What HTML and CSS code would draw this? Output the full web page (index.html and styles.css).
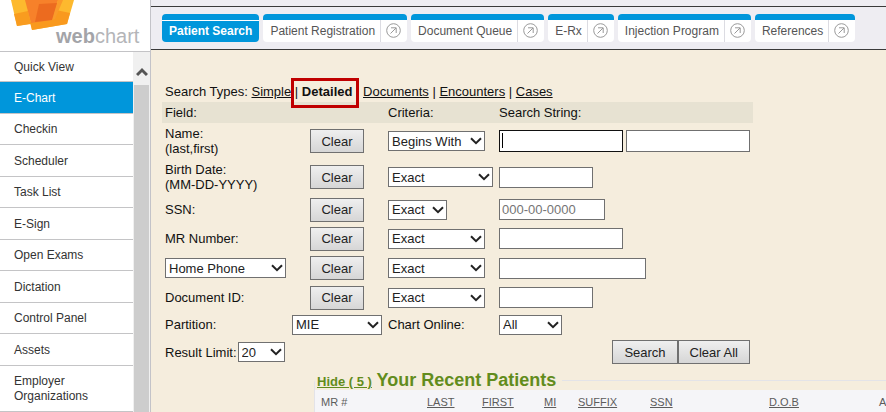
FILE: index.html
```html
<!DOCTYPE html>
<html lang="en">
<head>
<meta charset="utf-8">
<title>WebChart</title>
<link rel="stylesheet" href="styles.css">
</head>
<body>
<svg class="defs" aria-hidden="true">
  <symbol id="open" viewBox="0 0 15 15"><circle cx="7.5" cy="7.5" r="6.8"/><path d="M4.5 10.5 10 5M5 4.8h5.2V10"/></symbol>
  <symbol id="chevron" viewBox="0 0 12 8"><path d="M1 1.2 6 6.2 11 1.2"/></symbol>
</svg>
<aside class="sidebar">
  <div class="logo">
    <svg class="logo-mark" viewBox="0 0 66 31" aria-hidden="true">
      <path fill="#fdb92e" d="M1 0H48L42 20 7 26Z"/>
      <path fill="#fdb92e" d="M15 0H64L57 24 22 30Z"/>
      <path fill="#f99c1f" d="M4 14 18 11 21 24 7 26Z"/>
      <path fill="#f9991e" d="M20 22 42 20 46 10 60 13 57 24 22 30Z"/>
      <path fill="#f7812a" d="M15 0H48L42 20 21 23Z"/>
      <path fill="#fa9a2a" d="M48 0H53L45 19 42 20Z"/>
      <path fill="#ec6b1f" d="M29 4 47 3 42 20 25 22Z"/>
    </svg>
    <div class="logo-name"><b>web</b>chart</div>
  </div>
  <div class="menu">
    <nav class="menu-list">
      <a href="#">Quick View</a>
      <a href="#" class="active">E-Chart</a>
      <a href="#">Checkin</a>
      <a href="#">Scheduler</a>
      <a href="#">Task List</a>
      <a href="#">E-Sign</a>
      <a href="#">Open Exams</a>
      <a href="#">Dictation</a>
      <a href="#">Control Panel</a>
      <a href="#">Assets</a>
      <a href="#">Employer Organizations</a>
    </nav>
    <div class="scrollbar">
      <svg viewBox="0 0 12 10" aria-hidden="true"><path d="M1 8 6 3 11 8"/></svg>
      <div class="thumb"></div>
    </div>
  </div>
</aside>
<main class="main">
  <nav class="tabs">
    <div class="tab current"><a href="#">Patient Search</a></div>
    <div class="tab"><a href="#">Patient Registration</a><a href="#" class="pop" aria-label="Open"><svg><use href="#open"/></svg></a></div>
    <div class="tab"><a href="#">Document Queue</a><a href="#" class="pop" aria-label="Open"><svg><use href="#open"/></svg></a></div>
    <div class="tab"><a href="#">E-Rx</a><a href="#" class="pop" aria-label="Open"><svg><use href="#open"/></svg></a></div>
    <div class="tab"><a href="#">Injection Program</a><a href="#" class="pop" aria-label="Open"><svg><use href="#open"/></svg></a></div>
    <div class="tab"><a href="#">References</a><a href="#" class="pop" aria-label="Open"><svg><use href="#open"/></svg></a></div>
  </nav>
  <div class="content">
    <div class="types">Search Types: <a href="#">Simple</a> | <strong class="marked">Detailed</strong> | <a href="#">Documents</a> | <a href="#">Encounters</a> | <a href="#">Cases</a></div>
    <form class="search">
      <div class="row head"><span>Field:</span><span></span><span>Criteria:</span><span>Search String:</span></div>
      <div class="row tall">
        <label for="last">Name:<br>(last,first)</label>
        <button type="button">Clear</button>
        <span class="select w97"><select aria-label="Name criteria"><option>Begins With</option></select><svg><use href="#chevron"/></svg></span>
        <span class="pair"><span class="focused"><input id="last" class="w124" type="text"></span><input class="w124" type="text" aria-label="First name"></span>
      </div>
      <div class="row tall">
        <label for="birth">Birth Date:<br>(MM-DD-YYYY)</label>
        <button type="button">Clear</button>
        <span class="select w105"><select aria-label="Birth date criteria"><option>Exact</option></select><svg><use href="#chevron"/></svg></span>
        <input id="birth" class="w94" type="text">
      </div>
      <div class="row">
        <label for="ssn">SSN:</label>
        <button type="button">Clear</button>
        <span class="select w59"><select aria-label="SSN criteria"><option>Exact</option></select><svg><use href="#chevron"/></svg></span>
        <input id="ssn" class="w106" type="text" placeholder="000-00-0000">
      </div>
      <div class="row">
        <label for="mr">MR Number:</label>
        <button type="button">Clear</button>
        <span class="select w97"><select aria-label="MR number criteria"><option>Exact</option></select><svg><use href="#chevron"/></svg></span>
        <input id="mr" class="w124" type="text">
      </div>
      <div class="row roomy">
        <span class="select w121"><select aria-label="Contact field"><option>Home Phone</option></select><svg><use href="#chevron"/></svg></span>
        <button type="button">Clear</button>
        <span class="select w97"><select aria-label="Phone criteria"><option>Exact</option></select><svg><use href="#chevron"/></svg></span>
        <input class="w147" type="text" aria-label="Phone">
      </div>
      <div class="row">
        <label for="doc">Document ID:</label>
        <button type="button">Clear</button>
        <span class="select w97"><select aria-label="Document criteria"><option>Exact</option></select><svg><use href="#chevron"/></svg></span>
        <input id="doc" class="w94" type="text">
      </div>
      <div class="row partition">
        <label for="part">Partition:</label>
        <span class="select w90"><select id="part"><option>MIE</option></select><svg><use href="#chevron"/></svg></span>
        <label for="online">Chart Online:</label>
        <span class="select w63"><select id="online"><option>All</option></select><svg><use href="#chevron"/></svg></span>
      </div>
      <div class="limit">
        <label for="limit">Result Limit:</label>
        <span class="select w47"><select id="limit"><option>20</option></select><svg><use href="#chevron"/></svg></span>
        <div class="actions"><button type="submit">Search</button><button type="reset">Clear All</button></div>
      </div>
    </form>
    <fieldset class="recent">
      <legend><a href="#">Hide ( 5 )</a> Your Recent Patients</legend>
      <table>
        <colgroup><col class="c-mr"><col class="c-last"><col class="c-first"><col class="c-mi"><col class="c-suffix"><col class="c-ssn"><col class="c-dob"><col class="c-end"></colgroup>
        <thead><tr><th>MR #</th><th><a href="#">LAST</a></th><th><a href="#">FIRST</a></th><th><a href="#">MI</a></th><th><a href="#">SUFFIX</a></th><th><a href="#">SSN</a></th><th><a href="#">D.O.B</a></th><th>A</th></tr></thead>
      </table>
    </fieldset>
  </div>
</main>
</body>
</html>
```
FILE: styles.css
```css
* { box-sizing: border-box; }
body {
  margin: 0;
  height: 100vh;
  display: flex;
  overflow: hidden;
  background: #f5eddd;
  color: #111;
  font: 13px/15px "Liberation Sans", Arial, sans-serif;
}
a { color: inherit; }
.defs { position: absolute; width: 0; height: 0; }
symbol { fill: none; }

/* Sidebar */
.sidebar {
  flex: none;
  width: 151px;
  display: flex;
  flex-direction: column;
  background: #fff;
  border-right: 1px solid #c3c3c8;
}
.logo {
  position: relative;
  flex: none;
  height: 52px;
  padding: 24px 10px 0 56px;
  border-bottom: 1px solid #c3c3c6;
}
.logo-mark { position: absolute; left: 10px; top: 0; width: 66px; height: 31px; }
.logo-name { position: relative; font-size: 20px; line-height: 24px; color: #b4b5b8; }
.logo-name b { color: #a3a4a8; }
.menu { flex: 1; min-height: 0; display: flex; }
.menu-list { flex: 1; overflow: hidden; font-size: 12px; color: #333; }
.menu-list a {
  display: block;
  padding: 8px 30px 7px 14px;
  border-bottom: 1px solid #c4c4c6;
  text-decoration: none;
}
.menu-list a:nth-child(even) { padding-top: 9px; }
.menu-list a:first-child { padding-bottom: 6px; }
.menu-list .active { background: #0096db; color: #fff; }
.scrollbar {
  width: 17px;
  padding: 0 1px;
  display: flex;
  flex-direction: column;
  background: #f0f0f0;
}
.scrollbar svg { width: 12px; height: 10px; margin: 15px 2px 8px; fill: none; stroke: #555; stroke-width: 3; }
.thumb { flex: 1; background: #cdcdcd; }

/* Tabs */
.main { flex: 1; min-width: 0; overflow: hidden; }
.tabs {
  display: flex;
  gap: 4px;
  padding: 14px 11px 7px;
  background: linear-gradient(#3a3a3a, #3a3a3a) 0 6px / 100% 1px no-repeat #eeedf2;
  border-bottom: 1px solid #3a3a3a;
  font-size: 12px;
  color: #555;
}
.tab {
  display: flex;
  height: 28px;
  border-top: 6px solid #0096db;
  border-radius: 4px;
  background: #fff;
}
.tab a { padding: 4px 5px 0 7px; text-decoration: none; white-space: nowrap; }
.tab .pop { width: 27px; padding: 3px 5px; border-left: 1px solid #dcdce2; }
.pop svg { display: block; width: 15px; height: 15px; stroke: #999; stroke-width: 1; }
.tab.current { color: #fff; font-weight: bold; background: #0096db; }
.current a { padding-right: 7px; border-top: 1px solid #fff; padding-top: 3px; }

/* Search form */
.content { padding: 32px 0 0 11px; }
.types { padding: 0 3px; line-height: 20px; white-space: nowrap; }
.marked { position: relative; }
.marked::after {
  content: "";
  position: absolute;
  inset: -6px -7px -9px -11px;
  border: 3px solid #c00000;
}
.search { width: 591px; }
.row {
  display: grid;
  grid-template-columns: 145px 78px 111px 1fr;
  align-items: center;
  justify-items: start;
  height: 29px;
  padding-left: 3px;
}
.row.head { height: 21px; background: #e7e2d2; }
.row.tall { height: 36px; }
.row.roomy { height: 30px; }
.row.partition { grid-template-columns: 127px 96px 111px 1fr; height: 25px; }
.limit { display: flex; align-items: center; height: 30px; padding: 0 3px; gap: 1px; }
.actions { margin-left: auto; display: flex; }
button {
  height: 24px;
  padding: 0 11px;
  border: 1px solid #707070;
  background: linear-gradient(#efefef, #d6d6d6);
  color: #222;
  font: inherit;
}
.row button { width: 54px; padding: 0; }
input {
  display: block;
  height: 21px;
  padding: 0 2px;
  border: 1px solid #707070;
  border-radius: 0;
  background: #fff;
  font: inherit;
}
input::placeholder { color: #757575; opacity: 1; }
.pair { display: flex; gap: 3px; }
.pair input { height: 22px; }
.focused { position: relative; }
.focused input { border-color: #111; }
.focused::after {
  content: "";
  position: absolute;
  left: 3px;
  top: 3px;
  width: 1px;
  height: 15px;
  background: #000;
}
.select { position: relative; display: block; }
.select svg {
  position: absolute;
  right: 3px;
  top: 6px;
  width: 12px;
  height: 8px;
  stroke: #222;
  stroke-width: 2;
  pointer-events: none;
}
select {
  display: block;
  appearance: none;
  width: 100%;
  height: 20px;
  padding: 0 3px;
  border: 1px solid #707070;
  border-radius: 0;
  background: #fff;
  color: #222;
  font: inherit;
}
.w47 { width: 47px; }
.w59 { width: 59px; }
.w63 { width: 63px; }
.w90 { width: 90px; }
.w94 { width: 94px; }
.w97 { width: 97px; }
.w105 { width: 105px; }
.w106 { width: 106px; }
.w121 { width: 121px; }
.w124 { width: 124px; }
.w147 { width: 147px; }

/* Recent patients */
.recent {
  min-width: 0;
  margin: 3px 0 0 152px;
  padding: 0;
  border: 1px solid #e3e3e8;
  border-right: 0;
  border-radius: 3px 0 0 0;
}
legend {
  padding: 0 6px 0 2px;
  font-size: 18px;
  line-height: 20px;
  font-weight: bold;
  color: #628c1c;
}
legend a { font-size: 13px; line-height: 13px; }
table {
  width: 100%;
  table-layout: fixed;
  border-collapse: collapse;
  background: #f5f5f8;
  color: #5c5c5c;
  font-size: 11px;
}
th { height: 24px; padding: 0 0 0 6px; text-align: left; font-weight: normal; }
.c-mr { width: 106px; }
.c-last { width: 55px; }
.c-first { width: 62px; }
.c-mi { width: 34px; }
.c-suffix { width: 72px; }
.c-ssn { width: 119px; }
.c-dob { width: 110px; }
```
